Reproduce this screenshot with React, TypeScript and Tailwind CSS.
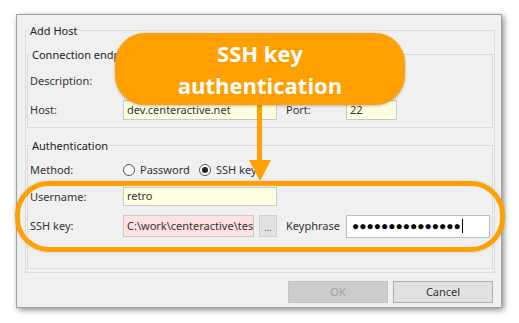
import React from "react";

const font = { fontFamily: '"Noto Sans", "Open Sans", sans-serif' };

function Label({ children, w = "w-[93px]" }: { children: React.ReactNode; w?: string }) {
  return <div className={`${w} shrink-0 text-[11px] leading-[16px] text-[#333]`}>{children}</div>;
}

function Radio({ checked, label }: { checked?: boolean; label: string }) {
  return (
    <div className="flex items-center gap-[5px]">
      <div className="flex h-[12px] w-[12px] items-center justify-center rounded-full border border-[#555] bg-white">
        {checked && <div className="h-[6px] w-[6px] rounded-full bg-[#222]" />}
      </div>
      <span className="text-[11px] leading-[16px] text-[#333]">{label}</span>
    </div>
  );
}

export default function App() {
  return (
    <div className="relative h-[323px] w-[519px] overflow-hidden bg-white" style={font}>
      {/* Dialog */}
      <div className="ml-[16px] mt-[14px] flex h-[294px] w-[486px] flex-col border border-[#a0a0a0] bg-[#f0f0f0] shadow-[2px_2px_6px_rgba(0,0,0,0.45)]">
        {/* Add Host group */}
        <div className="ml-[8px] mt-[15px] flex h-[243px] w-[470px] flex-col border border-[#dcdcdc]">
          <div className="-mt-[8px] ml-[3px] w-fit bg-[#f0f0f0] px-[1px] text-[11px] leading-[16px] text-[#222]">
            Add Host
          </div>

          {/* Connection endpoint group */}
          <div className="mx-[1px] mt-[15px] flex h-[74px] flex-col border border-[#dcdcdc]">
            <div className="-mt-[8px] ml-[3px] w-fit bg-[#f0f0f0] px-[1px] text-[11px] leading-[16px] text-[#222]">
              Connection endpoint
            </div>
            <div className="ml-[2px] mt-[8px] flex h-[20px] items-center">
              <Label>Description:</Label>
              <div className="h-[20px] w-[274px] border border-[#c8c8c8] bg-[#ffffe1]" />
            </div>
            <div className="ml-[2px] mt-[9px] flex h-[20px] items-center">
              <Label>Host:</Label>
              <div className="flex h-[20px] w-[154px] items-center border border-[#c8c8c8] bg-[#ffffe1] px-[3px] text-[11px] text-[#333]">
                dev.centeractive.net
              </div>
              <div className="ml-[9px]">
                <Label w="w-[60px]">Port:</Label>
              </div>
              <div className="flex h-[20px] w-[51px] items-center border border-[#c8c8c8] bg-[#ffffe1] px-[3px] text-[11px] text-[#333]">
                22
              </div>
            </div>
          </div>

          {/* Authentication group */}
          <div className="mx-[1px] mt-[17px] flex h-[124px] flex-col border border-[#dcdcdc]">
            <div className="-mt-[8px] ml-[3px] w-fit bg-[#f0f0f0] px-[1px] text-[11px] leading-[16px] text-[#222]">
              Authentication
            </div>
            <div className="ml-[2px] mt-[7px] flex h-[18px] items-center">
              <Label>Method:</Label>
              <div className="w-[76px]">
                <Radio label="Password" />
              </div>
              <Radio checked label="SSH key" />
            </div>
            <div className="ml-[2px] mt-[8px] flex h-[19px] items-center">
              <Label>Username:</Label>
              <div className="flex h-[19px] w-[154px] items-center border border-[#c8c8c8] bg-[#ffffe1] px-[3px] text-[11px] text-[#333]">
                retro
              </div>
            </div>
            <div className="ml-[2px] mt-[9px] flex h-[22px] items-center">
              <Label>SSH key:</Label>
              <div className="flex h-[22px] w-[131px] items-center overflow-hidden whitespace-nowrap border border-[#c8c8c8] bg-[#ffe1e1] px-[3px] text-[11px] text-[#333]">
                C:\work\centeractive\test\id_rsa
              </div>
              <div className="ml-[5px] flex h-[22px] w-[18px] items-end justify-center border border-[#cfcfcf] bg-[#e1e1e1] pb-[4px] text-[9px] leading-[9px] text-[#555]">
                ...
              </div>
              <div className="ml-[9px]">
                <Label w="w-[60px]">Keyphrase</Label>
              </div>
              <div className="flex h-[23px] w-[144px] items-center border border-[#bdbdbd] bg-white px-[5px]">
                <span className="text-[12px] leading-[12px] tracking-[0px] text-black">●●●●●●●●●●●●●●●</span>
                <span className="ml-[1px] h-[14px] w-[1px] bg-black" />
              </div>
            </div>
          </div>
        </div>

        {/* Buttons */}
        <div className="mr-[8px] mt-[8px] flex justify-end gap-[5px]">
          <div className="flex h-[22px] w-[100px] items-center justify-center border border-[#c4c4c4] bg-[#cccccc] text-[11px] text-[#a0a0a0]">
            OK
          </div>
          <div className="flex h-[22px] w-[100px] items-center justify-center border border-[#adadad] bg-[#e1e1e1] text-[11px] text-[#333]">
            Cancel
          </div>
        </div>
      </div>

      {/* Highlight rounded rectangle */}
      <div className="absolute left-[15px] top-[181px] h-[71px] w-[490px] rounded-[34px] border-[5px] border-[#ffa000] shadow-[0_0_3px_rgba(120,170,220,0.5)]" />

      {/* Arrow */}
      <svg className="absolute left-0 top-0" width="519" height="323" viewBox="0 0 519 323">
        <rect x="257" y="100" width="5" height="62" fill="#ffa000" />
        <polygon points="249,160 271,160 260,181" fill="#ffa000" />
      </svg>

      {/* Callout */}
      <div
        className="absolute left-[115px] top-[33px] flex h-[72px] w-[290px] flex-col items-center justify-center rounded-[30px] bg-[#ffa000] text-[22px] font-bold leading-[32px] text-white shadow-[0_1px_3px_rgba(0,0,0,0.25)]"
        style={{ fontFamily: '"Open Sans", sans-serif' }}
      >
        <span>SSH key</span>
        <span>authentication</span>
      </div>
    </div>
  );
}
